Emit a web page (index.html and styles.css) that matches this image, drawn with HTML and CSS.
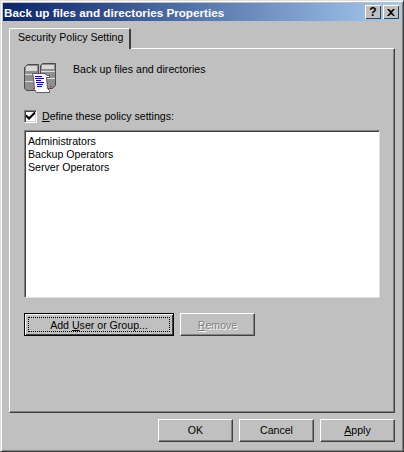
FILE: index.html
```html
<!DOCTYPE html>
<html lang="en">
<head>
    <meta charset="UTF-8">
    <meta name="viewport" content="width=device-width, initial-scale=1.0">
    <title>Back up files and directories Properties</title>
    <link rel="stylesheet" href="styles.css">
</head>
<body>
    <div class="dialog">
        <div class="titlebar">
            <span class="title">Back up files and directories Properties</span>
            <div class="title-buttons">
                <div class="caption-btn help">?</div>
                <div class="caption-btn close">
                    <svg width="8" height="7" viewBox="0 0 8 7"><path d="M0 0h2l2 2 2-2h2L5 3.500 8 7H6L4 5 2 7H0l3-3.500z" fill="#000"/></svg>
                </div>
            </div>
        </div>
        <div class="content">
            <div class="tabs">
                <div class="tab">Security Policy Setting</div>
            </div>
            <div class="panel">
                <div class="policy-row">
                    <svg class="policy-icon" width="32" height="32" viewBox="0 0 32 32">
                        <path d="M.5 5.500l3-3h11v23l-3 3h-9l-2-2z" fill="#8f8f8f" stroke="#4a4a4a"/>
                        <path d="M16.500 3.500l2-2h13v22l-3 3h-12z" fill="#8f8f8f" stroke="#4a4a4a"/>
                        <path d="M2 4h11v5H2zM18 3h12v4H18z" fill="#d8d8d8"/>
                        <path d="M1 12.500h13M1 19.500h13M17 9.500h14M17 16.500h14" fill="none" stroke="#e0e0e0"/>
                        <path d="M8.500 11.500h12l3 2h2v2h-3l1 11 2 2v2h-13l-2-3-1-12z" fill="#fff" stroke="#3c3c3c" stroke-width=".8"/>
                        <path d="M11 14.500h7M11 16.500h9M12 18.500h5M12 20.500h8M13 22.500h6M13 24.500h5" stroke="#0000e8"/>
                        <path d="M26 24h2v1h-2zM9 26h1v1H9z" fill="#e01030"/>
                    </svg>
                    <span class="policy-name">Back up files and directories</span>
                </div>
                <label class="define-row">
                    <span class="checkbox">
                        <svg width="9" height="9" viewBox="0 0 9 9"><path d="M0 3l1 0 2 2 5-5 1 0v2L3 8 0 5z" fill="#000"/></svg>
                    </span>
                    <span><u>D</u>efine these policy settings:</span>
                </label>
                <div class="listbox">
                    <div>Administrators</div>
                    <div>Backup Operators</div>
                    <div>Server Operators</div>
                </div>
                <div class="list-buttons">
                    <div class="btn btn-default"><div class="focus"><span>Add <u>U</u>ser or Group...</span></div></div>
                    <div class="btn btn-disabled"><span><u>R</u>emove</span></div>
                </div>
            </div>
            <div class="footer">
                <div class="btn"><span class="nudge">OK</span></div>
                <div class="btn"><span class="nudge">Cancel</span></div>
                <div class="btn"><span class="nudge"><u>A</u>pply</span></div>
            </div>
        </div>
    </div>
</body>
</html>
```

FILE: styles.css
```css
html, body {
    margin: 0;
    height: 100%;
}
body {
    font-family: "Liberation Sans", Arial, sans-serif;
    font-size: 10.6px;
    color: #000;
    background: #c0c0c0;
}
.dialog {
    box-sizing: border-box;
    width: 404px;
    height: 452px;
    padding: 2px;
    background: #c0c0c0;
    border: 1px solid;
    border-color: #dfdfdf #404040 #404040 #dfdfdf;
    box-shadow: inset 1px 1px 0 #fff, inset -1px -1px 0 #808080;
    display: flex;
    flex-direction: column;
}
.titlebar {
    height: 18px;
    background: linear-gradient(to right, #0a246a, #a6caf0);
    display: flex;
    align-items: center;
    justify-content: space-between;
    padding: 0 2px 0 1px;
    flex: none;
}
.title {
    color: #fff;
    font-weight: bold;
    font-size: 11.700px;
    white-space: nowrap;
}
.title-buttons {
    display: flex;
}
.caption-btn {
    box-sizing: border-box;
    width: 16px;
    height: 14px;
    background: #c0c0c0;
    box-shadow: inset 1px 1px 0 #fff, inset -1px -1px 0 #404040;
    display: flex;
    align-items: center;
    justify-content: center;
    font-weight: bold;
    font-size: 12px;
}
.close {
    margin-left: 2px;
}
.content {
    flex: 1;
    display: flex;
    flex-direction: column;
    padding: 7px 6px 0;
}
.tabs {
    display: flex;
    height: 20px;
    position: relative;
    z-index: 1;
}
.tab {
    box-sizing: border-box;
    width: 122px;
    height: 21px;
    padding: 2px 0 0 8px;
    background: #c0c0c0;
    border-top: 1px solid #fff;
    border-left: 1px solid #fff;
    border-right: 2px solid #404040;
    border-top-left-radius: 2px;
    border-top-right-radius: 2px;
    white-space: nowrap;
}
.panel {
    box-sizing: border-box;
    width: 386px;
    height: 365px;
    padding: 13px 14px 0;
    border: 1px solid;
    border-color: #fff #404040 #404040 #fff;
    box-shadow: inset -1px -1px 0 #808080;
}
.policy-row {
    display: flex;
    align-items: flex-start;
    gap: 17px;
    height: 32px;
}
.policy-name {
    padding-top: 1px;
}
.policy-icon {
    flex: none;
}
.define-row {
    display: flex;
    align-items: center;
    gap: 5px;
    margin-top: 14px;
    height: 16px;
}
.checkbox {
    box-sizing: border-box;
    width: 13px;
    height: 13px;
    background: #fff;
    border: 1px solid;
    border-color: #808080 #fff #fff #808080;
    box-shadow: inset 1px 1px 0 #404040, inset -1px -1px 0 #d4d0c8;
    display: flex;
    align-items: center;
    justify-content: center;
}
.listbox {
    box-sizing: border-box;
    width: 356px;
    height: 168px;
    margin-top: 6px;
    padding: 4px 3px 3px;
    background: #fff;
    border: 1px solid;
    border-color: #808080 #dfdfdf #dfdfdf #808080;
    box-shadow: inset 1px 1px 0 #404040;
    line-height: 13px;
}
.list-buttons {
    display: flex;
    gap: 6px;
    margin-top: 15px;
}
.btn {
    box-sizing: border-box;
    width: 75px;
    height: 23px;
    background: #c0c0c0;
    border: 1px solid;
    border-color: #fff #404040 #404040 #fff;
    box-shadow: inset -1px -1px 0 #808080;
    display: flex;
    align-items: center;
    justify-content: center;
    white-space: nowrap;
}
.btn-default {
    width: 150px;
    border: 1px solid #000;
    box-shadow: inset 1px 1px 0 #fff, inset -1px -1px 0 #404040;
    padding: 3px;
}
.focus {
    flex: 1;
    align-self: stretch;
    display: flex;
    align-items: center;
    justify-content: center;
    outline: 1px dotted #000;
    outline-offset: -1px;
}
.btn-disabled {
    color: #808080;
    text-shadow: 1px 1px 0 #fff;
}
.footer {
    display: flex;
    justify-content: flex-end;
    gap: 6px;
    margin-top: 6px;
}
.nudge {
    margin-bottom: 2px;
}
```
